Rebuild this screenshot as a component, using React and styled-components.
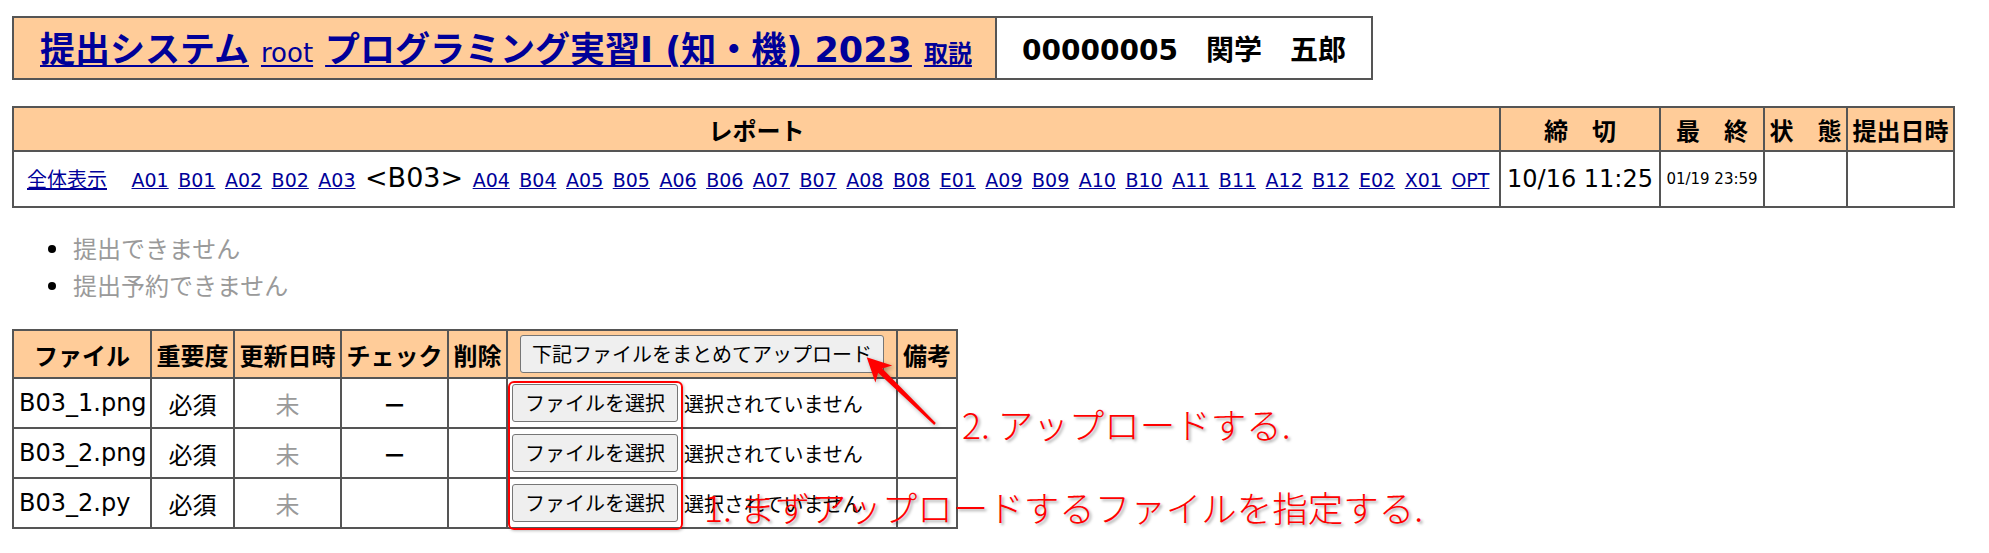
import React from "react";
import styled, { createGlobalStyle } from "styled-components";

const BORDER = "#555555";
const PEACH = "#ffcc99";
const LINK = "#000099";
const MUTED = "#9a9a9a";
const NOTE_RED = "#ff0000";

const GlobalStyle = createGlobalStyle`
  html, body { margin: 0; padding: 0; background: #ffffff; }
  body {
    font-family: "DejaVu Sans", "Noto Sans CJK JP", sans-serif;
    color: #000000;
  }
`;

const Page = styled.div`
  padding: 16px 0 20px 12px;
`;

/* A ruled table built on CSS grid: the outer frame draws top/left, every cell draws right/bottom */
const Table = styled.div`
  display: grid;
  width: max-content;
  grid-template-columns: ${(p) => p.$cols};
  grid-template-rows: ${(p) => p.$rows};
  border-top: 2px solid ${BORDER};
  border-left: 2px solid ${BORDER};
`;

const HeaderBar = styled(Table)``;

const ReportTable = styled(Table)`
  margin-top: 26px;
`;

const FileTable = styled(Table)``;

const Cell = styled.div`
  box-sizing: border-box;
  border-right: 2px solid ${BORDER};
  border-bottom: 2px solid ${BORDER};
  background: ${(p) => (p.$head ? PEACH : "#ffffff")};
  display: flex;
  align-items: center;
  justify-content: ${(p) => (p.$left ? "flex-start" : "center")};
  padding: ${(p) => p.$pad || "0"};
  font-size: ${(p) => p.$size || 24}px;
  font-weight: ${(p) => (p.$bold ? 700 : 400)};
  color: ${(p) => p.$color || "#000000"};
  white-space: nowrap;
  overflow: visible;
`;

/* ---- top bar ---- */
const TitleCell = styled(Cell)`
  gap: 12px;
  align-items: baseline;
`;

const TitleLink = styled.a`
  color: ${LINK};
  font-weight: 700;
  font-size: 35px;
  text-decoration: underline;
  text-decoration-thickness: 2px;
  text-underline-offset: 3px;
`;

const RootLink = styled.a`
  color: ${LINK};
  font-size: 26px;
  text-decoration: underline;
  text-underline-offset: 3px;
`;

const GuideLink = styled.a`
  color: ${LINK};
  font-size: 24px;
  font-weight: 700;
  text-decoration: underline;
  text-underline-offset: 3px;
`;

const UserCell = styled(Cell)`
  font-size: 28px;
  font-weight: 700;
`;

/* ---- report list ---- */
const ReportLinks = styled(Cell)`
  gap: 9.5px;
  align-items: baseline;
  padding: 10px 0 0 13px;
`;

const AllLink = styled.a`
  color: ${LINK};
  font-size: 20px;
  margin-right: 15px;
  text-decoration: underline;
`;

const ReportLink = styled.a`
  color: ${LINK};
  font-size: 19px;
  text-decoration: underline;
`;

const CurrentReport = styled.span`
  font-size: 27px;
  color: #000000;
`;

/* ---- status list ---- */
const StatusList = styled.ul`
  list-style: none;
  margin: 21px 0 26px 0;
  padding: 0;
`;

const StatusItem = styled.li`
  display: flex;
  align-items: center;
  height: 37px;
  font-size: 24px;
  color: ${MUTED};
  font-family: "Noto Sans CJK JP", sans-serif;

  &::before {
    content: "";
    flex: none;
    width: 8px;
    height: 8px;
    border-radius: 50%;
    background: #000000;
    margin: 2px 17px 0 36px;
  }
`;

/* ---- file table ---- */
const FileSection = styled.div`
  position: relative;
  width: max-content;
`;

const FileName = styled(Cell)`
  justify-content: flex-start;
  padding-left: 5px;
`;

const Dash = styled.span`
  font-family: "Noto Sans CJK JP", sans-serif;
  font-weight: 700;
`;

const PickerCell = styled(Cell)`
  justify-content: flex-start;
  padding-left: 4px;
  gap: 6px;
  font-size: 20px;
  font-family: "Noto Sans CJK JP", sans-serif;
`;

const NativeButton = styled.button`
  box-sizing: border-box;
  height: 38px;
  padding: 0 ${(p) => p.$padX || 12}px;
  font-family: "Noto Sans CJK JP", sans-serif;
  font-size: 20px;
  color: #000000;
  background: #efefef;
  border: 1px solid #767676;
  border-radius: 3px;
  line-height: 1;
  white-space: nowrap;
`;

/* ---- callouts drawn over the file table ---- */
const Highlight = styled.div`
  position: absolute;
  left: 496px;
  top: 52px;
  width: 175px;
  height: 149px;
  box-sizing: border-box;
  border: 2px solid ${NOTE_RED};
  border-radius: 6px;
  box-shadow: 1px 1px 3px rgba(0, 0, 0, 0.25);
  pointer-events: none;
`;

const Note = styled.div`
  position: absolute;
  left: ${(p) => p.$x}px;
  top: ${(p) => p.$y}px;
  font-family: "Noto Sans CJK JP", sans-serif;
  font-weight: 300;
  font-size: 35.5px;
  line-height: 1;
  color: ${NOTE_RED};
  white-space: nowrap;
  text-shadow: 2px 2px 3px rgba(0, 0, 0, 0.35);
`;

const ArrowSvg = styled.svg`
  position: absolute;
  left: 838px;
  top: 15px;
  overflow: visible;
  filter: drop-shadow(2px 2px 2px rgba(0, 0, 0, 0.35));
`;

const reports = [
  "A01", "B01", "A02", "B02", "A03", "<B03>", "A04", "B04", "A05", "B05",
  "A06", "B06", "A07", "B07", "A08", "B08", "E01", "A09", "B09", "A10",
  "B10", "A11", "B11", "A12", "B12", "E02", "X01", "OPT",
];

const files = [
  { name: "B03_1.png", check: true },
  { name: "B03_2.png", check: true },
  { name: "B03_2.py", check: false },
];

export default function App() {
  return (
    <>
      <GlobalStyle />
      <Page>
        <HeaderBar $cols="983px 376px" $rows="62px">
          <TitleCell $head $left $pad="3px 0 0 26px">
            <TitleLink href="#">提出システム</TitleLink>
            <RootLink href="#">root</RootLink>
            <TitleLink href="#">プログラミング実習Ⅰ (知・機) 2023</TitleLink>
            <GuideLink href="#">取説</GuideLink>
          </TitleCell>
          <UserCell>00000005　関学　五郎</UserCell>
        </HeaderBar>

        <ReportTable $cols="1487px 160px 104px 83px 107px" $rows="44px 56px">
          <Cell $head $bold>レポート</Cell>
          <Cell $head $bold>締　切</Cell>
          <Cell $head $bold>最　終</Cell>
          <Cell $head $bold>状　態</Cell>
          <Cell $head $bold>提出日時</Cell>

          <ReportLinks $left>
            <AllLink href="#">全体表示</AllLink>
            {reports.map((r) =>
              r.startsWith("<") ? (
                <CurrentReport key={r}>{r}</CurrentReport>
              ) : (
                <ReportLink key={r} href="#">
                  {r}
                </ReportLink>
              )
            )}
          </ReportLinks>
          <Cell $size={24}>10/16 11:25</Cell>
          <Cell $size={15}>01/19 23:59</Cell>
          <Cell />
          <Cell />
        </ReportTable>

        <StatusList>
          <StatusItem>提出できません</StatusItem>
          <StatusItem>提出予約できません</StatusItem>
        </StatusList>

        <FileSection>
          <FileTable
            $cols="138px 83px 107px 107px 59px 390px 60px"
            $rows="48px 50px 50px 50px"
          >
            <Cell $head $bold>ファイル</Cell>
            <Cell $head $bold>重要度</Cell>
            <Cell $head $bold>更新日時</Cell>
            <Cell $head $bold>チェック</Cell>
            <Cell $head $bold>削除</Cell>
            <Cell $head>
              <NativeButton $padX={11}>下記ファイルをまとめてアップロード</NativeButton>
            </Cell>
            <Cell $head $bold>備考</Cell>

            {files.map((f) => (
              <React.Fragment key={f.name}>
                <FileName>{f.name}</FileName>
                <Cell>必須</Cell>
                <Cell $color={MUTED}>未</Cell>
                <Cell>{f.check ? <Dash>－</Dash> : null}</Cell>
                <Cell />
                <PickerCell>
                  <NativeButton>ファイルを選択</NativeButton>
                  <span>選択されていません</span>
                </PickerCell>
                <Cell />
              </React.Fragment>
            ))}
          </FileTable>

          <Highlight />
          <ArrowSvg width="100" height="95" viewBox="0 0 100 95">
            <polygon
              points="16.7,13.3 42.2,21.6 32.3,24.5 85.8,79.1 84.2,80.9 28.1,28.7 25.4,38.6"
              fill={NOTE_RED}
            />
          </ArrowSvg>
          <Note $x={950} $y={77}>2. アップロードする.</Note>
          <Note $x={692} $y={160}>1. まずアップロードするファイルを指定する.</Note>
        </FileSection>
      </Page>
    </>
  );
}
